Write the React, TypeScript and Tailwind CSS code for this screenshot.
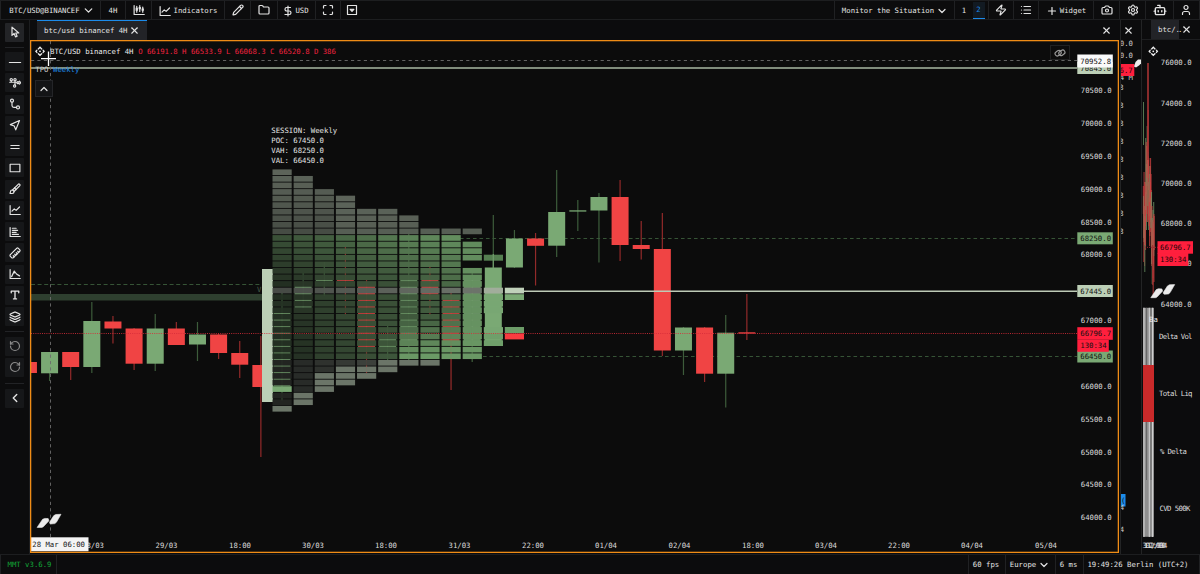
import type { ReactNode } from "react";
import {
  Bot, Brush, Camera, ChevronDown, ChevronLeft, ChevronUp, DollarSign, Folder, Layers, List, Maximize,
  Pencil, Plus, RotateCcw, RotateCw, Ruler, Settings, User, X, Zap,
} from "lucide-react";

const GREEN = "#7aa974";
const RED = "#f04444";
const STEP = 21.13;
const ROW = 6.57;

// [slot, up, open/close top, open/close bottom, high, low], slot 0 is the session start
const candles: [number, number, number, number, number, number][] = [
  [-12, 0, 362, 373, 362, 373],
  [-11, 1, 352, 373.3, 352, 381],
  [-10, 0, 352, 367, 352, 380],
  [-9, 1, 321, 367, 302, 373],
  [-8, 0, 321.5, 328.5, 316, 343.5],
  [-7, 0, 328.5, 363.7, 328, 370],
  [-6, 1, 328.5, 363.7, 314, 371],
  [-5, 0, 328.5, 345, 322, 345],
  [-4, 1, 334.5, 344.5, 322, 361],
  [-3, 0, 334.5, 353, 334, 359],
  [-2, 0, 353, 364.7, 341, 378],
  [-1, 0, 365, 387, 336, 457],
  [0, 1, 312, 386, 293, 401],
  [1, 1, 286, 308, 273, 308],
  [2, 1, 280, 281, 262, 296],
  [3, 0, 280, 281, 247, 315],
  [4, 0, 286, 347.5, 280, 373],
  [5, 1, 339, 348, 326, 361],
  [6, 1, 279, 346, 232, 360],
  [7, 0, 280, 294.5, 267, 315],
  [8, 0, 299.5, 341.5, 293, 390],
  [9, 1, 275, 346, 272, 362],
  [10, 1, 267.5, 345, 215, 346],
  [11, 1, 238.5, 267.5, 230, 268],
  [12, 0, 238.5, 245.8, 233, 285.5],
  [13, 1, 212, 245.7, 170, 257],
  [14, 1, 210.3, 211.6, 200, 231],
  [15, 1, 197, 210.5, 193, 262.5],
  [16, 0, 197, 245, 180, 261],
  [17, 0, 245, 249, 221, 259.5],
  [18, 0, 249, 350.5, 213, 356],
  [19, 1, 327.5, 350.5, 327, 375],
  [20, 0, 327.5, 373.7, 327, 382],
  [21, 1, 332.7, 373.7, 315, 407.5],
  [22, 0, 332.3, 333.6, 294, 340],
];

// first row, last row, first bright tail row, then strength at top, middle and bottom of the value area
const profile = [
  { from: 0, to: 36, tail: 36, top: 0.43, mid: 0.22, low: 0.22 },
  { from: 1, to: 35, tail: 34, top: 0.48, mid: 0.26, low: 0.24 },
  { from: 3, to: 33, tail: 31, top: 0.52, mid: 0.33, low: 0.33 },
  { from: 4, to: 32, tail: 30, top: 0.57, mid: 0.37, low: 0.37 },
  { from: 6, to: 31, tail: 30, top: 0.62, mid: 0.42, low: 0.42 },
  { from: 6, to: 30, tail: 29, top: 0.68, mid: 0.43, low: 0.46 },
  { from: 7, to: 29, tail: 29, top: 0.74, mid: 0.48, low: 0.82 },
  { from: 9, to: 29, tail: 29, top: 0.78, mid: 0.5, low: 0.85 },
  { from: 9, to: 28, tail: 29, top: 0.82, mid: 0.58, low: 0.88 },
  { from: 9, to: 28, tail: 29, top: 0.8, mid: 0.84, low: 0.88 },
];

const timeLabels: [number, string][] = [
  [93, "28/03"], [166.5, "29/03"], [240, "18:00"], [313, "30/03"], [386, "18:00"], [459.5, "31/03"], [533, "22:00"],
  [606, "01/04"], [679.5, "02/04"], [753, "18:00"], [826, "03/04"], [899, "22:00"], [972, "04/04"], [1046, "05/04"],
];

const priceLabels = [70500, 70000, 69500, 69000, 68500, 68000, 67000, 66000, 65500, 65000, 64500, 64000];

function mix(color: number[], strength: number) {
  return `rgb(${color.map((c) => Math.round(12 + (c - 12) * strength)).join(",")})`;
}

function cellColor(col: number, row: number) {
  const p = profile[col];
  if (row === 18) return mix([176, 188, 172], 0.36 + col * 0.025);
  if (row < 10) return mix([136, 148, 132], 0.65 - (col < 3 ? row * 0.02 : (row - 4) * 0.01));
  if (row > 28) return row >= p.tail ? mix([136, 148, 132], 0.77) : mix([120, 130, 118], 0.2 + col * 0.06);
  let s = p.mid;
  if (row < 17) s = p.top + ((p.mid - p.top) * (row - 10)) / 7;
  else if (row > 22) s = p.mid + ((p.low - p.mid) * (row - 22)) / 5;
  return mix([118, 170, 112], Math.min(s, 0.9));
}

function Candle({ c }: { c: (typeof candles)[number] }) {
  const [slot, up, top, bottom, high, low] = c;
  const x = 282 + slot * STEP;
  // candles under the profile only show between its rows
  const covered = slot >= 0 && slot < 10;
  return (
    <g>
      <rect x={x - 0.6} y={high} width="1.2" height={low - high} fill={up ? "#3d5c3b" : "#922a2a"} />
      <rect x={x - 8.5} y={top} width="17" height={bottom - top} fill={up ? GREEN : RED} opacity={covered ? 0.85 : 1} />
    </g>
  );
}

function Profile() {
  const cells: ReactNode[] = [];
  profile.forEach((p, col) => {
    for (let row = p.from; row <= p.to; row++) {
      if (col === 9 && (row === 10 || row === 14)) continue;
      cells.push(
        <rect key={`${col}-${row}`} x={272.5 + col * STEP} y={169.4 + row * ROW} width="19.2" height="5.7"
          fill={col === 0 && row === 33 ? GREEN : cellColor(col, row)} />
      );
    }
  });
  return <g>{cells}</g>;
}

function PriceTag({ y, text, bg, w = 35.5, h = 12 }: { y: number; text: string; bg: string; w?: number; h?: number }) {
  return (
    <g>
      <rect x="1077.3" y={y - h / 2} width={w} height={h} fill={bg} />
      <text x="1080.3" y={y + 2.5} fill="#101010">{text}</text>
    </g>
  );
}

function Logo({ x, y }: { x: number; y: number }) {
  return (
    <g transform={`translate(${x} ${y})`} fill="#ececec" stroke="#ececec" strokeWidth=".6" strokeLinejoin="round">
      <path d="M.3 13.4L5.8 5.3L8 4.4L11.4 4.6L12.1 6.8L6.5 12.8L5 13.4Z" />
      <path d="M12.9 8L17 1.6L19 .5L24.2 .3L19.6 8.3L18 9.6L13.8 10L12.9 9.3Z" />
    </g>
  );
}

function Drag({ x, y }: { x: number; y: number }) {
  return (
    <g transform={`translate(${x} ${y})`} fill="#f2f2f2">
      <path d="M-2.6 -2.4L0 -5L2.6 -2.4L1.5 -1.6L0 -3L-1.5 -1.6ZM-2.6 2.4L0 5L2.6 2.4L1.5 1.6L0 3L-1.5 1.6Z" />
      <path d="M-3.2 -1.9L-5 0L-3.2 1.9L-2.3 1.2L-3.2 0L-2.3 -1.2ZM3.2 -1.9L5 0L3.2 1.9L2.3 1.2L3.2 0L2.3 -1.2Z" />
      <circle r=".9" />
    </g>
  );
}

function MainChart() {
  return (
    <svg className="block h-full w-full text-[7.3px]" viewBox="31 41 1087 511" fill="#dcdcdc">
      <rect x="31" y="294" width="231" height="6.5" fill="#2e3f2f" />
      <path d="M31 284.5H262" stroke="#365436" strokeDasharray="4 2.6" strokeWidth="1" />
      <text x="257" y="291.5" fill="#4a5e49">V</text>
      <path d="M460 238.5H1077M483 356.5H1077" stroke="#365436" strokeDasharray="3.6 2.9" strokeWidth="1" />
      {candles.map((c) => <Candle key={c[0]} c={c} />)}
      <rect x="262" y="269" width="11" height="133" fill="#bccfb6" />
      <Profile />
      {candles.slice(12, 22).map((c) => (
        <rect key={c[0]} x={281.5 + c[0] * STEP} y={c[4]} width="1" height={c[5] - c[4]} fill={c[1] ? "#709c6b" : "#c04c44"} opacity=".08" />
      ))}
      <rect x="483.8" y="254.7" width="19.2" height="6" fill="#557f51" />
      <rect x="492.7" y="254" width="1.2" height="14" fill="#719d6c" />
      {[19, 20, 21, 24, 25, 26].map((r) => (
        <rect key={r} x="483.8" y={169.4 + r * ROW} width="19.2" height="5.8" fill={r > 24 ? "#6f9f6a" : "#78a773"} />
      ))}
      <rect x="483.8" y="287.7" width="19.2" height="5.8" fill="#a1ad9b" />
      <rect x="504.8" y="287.7" width="19.2" height="5.8" fill="#c0d1ba" />
      <rect x="504.8" y="294.2" width="19.2" height="5.8" fill={GREEN} />
      <rect x="504.8" y="327" width="19.2" height="6" fill="#6d9d69" />
      <rect x="504.8" y="333.4" width="19.2" height="6" fill="#f83c40" />
      <path d="M524 291.3H1077" stroke="#bdcab6" strokeWidth="1.6" />
      <path d="M31 333.5H1077" stroke="#d82d3a" strokeDasharray="1 1.2" strokeWidth="1" opacity=".85" />
      <path d="M31 68H1077" stroke="#a9b8a3" strokeWidth="1.7" />
      <path d="M31 60.5H1077M50.5 41V538" stroke="#6c6c6c" strokeDasharray="3.2 3.2" strokeWidth=".9" />

      <g fill="#e6e6e6">
        <text x="271.3" y="133.2">SESSION: Weekly</text>
        <text x="271.3" y="143.2">POC: 67450.0</text>
        <text x="271.3" y="153.2">VAH: 68250.0</text>
        <text x="271.3" y="163.2">VAL: 66450.0</text>
      </g>

      {priceLabels.map((p) => (
        <text key={p} x="1080.8" y={126 + (70000 - p) * 0.0657}>{p}.0</text>
      ))}
      <PriceTag y={68} text="70845.0" bg="#bccfb6" />
      <PriceTag y={61} text="70952.8" bg="#fafafa" h={13} />
      <PriceTag y={238.3} text="68250.0" bg={GREEN} />
      <PriceTag y={291} text="67445.0" bg="#bccfb6" />
      <PriceTag y={356.5} text="66450.0" bg={GREEN} />
      <PriceTag y={345.8} text="130:34" bg="#ff1f3d" w={31.5} />
      <PriceTag y={333.5} text="66796.7" bg="#ff1f3d" h={12.6} />

      {timeLabels.map(([x, t]) => <text key={x} x={x} y="548.3" textAnchor="middle">{t}</text>)}
      <rect x="31" y="537.3" width="57.5" height="14" fill="#f4f4f4" />
      <text x="32.3" y="547.2" fill="#151515">28 Mar 06:00</text>
      <Logo x={36.8} y={514} />

      <Drag x={40} y={51.3} />
      <text x="50" y="54" fill="#ebebeb">BTC/USD binancef 4H</text>
      <text x="138.2" y="54" fill="#f0223f">O 66191.8 H 66533.9 L 66068.3 C 66520.8 D 386</text>
      <text x="35.3" y="71.7" fill="#d0d0d0">TPO</text>
      <text x="53" y="71.7" fill="#1c8bea">Weekly</text>
      <path d="M41 58.6H56M48.5 51.5V66" stroke="#fff" strokeWidth="1.3" />
      <rect x="31" y="41" width="1087" height="511" fill="none" stroke="#ef8c16" strokeWidth=".7" opacity=".8" />
    </svg>
  );
}

// sidebar and toolbar drawings the icon set lacks
function Glyph({ children, size = 12 }: { children: ReactNode; size?: number }) {
  return (
    <svg width={size} height={size} viewBox="0 0 16 16" fill="none" stroke="currentColor" strokeWidth="1.6" strokeLinecap="round" strokeLinejoin="round">
      {children}
    </svg>
  );
}

const LineChart = () => <Glyph><path d="M1.5 2v12H15M4 9.5l3-3 2.5 2 4.5-4.5" /></Glyph>;

const tools: ReactNode[] = [
  <Glyph size={14}><path d="M1.5 8.5H14.5" strokeWidth="1.2" /></Glyph>,
  <Glyph><circle cx="3" cy="3.5" r="1.5" /><circle cx="8" cy="3.5" r="1.5" /><circle cx="12" cy="7.5" r="1.4" /><circle cx="7.5" cy="12" r="1.5" /><path d="M1 7h9M3 5v2M8 5v5M14 5.5L15.5 7.5L14 9.5" /></Glyph>,
  <Glyph><circle cx="4" cy="3.5" r="2" /><circle cx="12" cy="12.5" r="2" /><path d="M4 5.5v4.5q0 2.5 2.5 2.5H10" /></Glyph>,
  <Glyph><path d="M14 2L1.8 7.5L7 9.3L9 14.5Z" /></Glyph>,
  <Glyph><path d="M2.5 6H13.5M2.5 10H13.5" /></Glyph>,
  <Glyph><rect x="1.5" y="3" width="13" height="10" /></Glyph>,
  <Brush size={12} />,
  <LineChart />,
  <Glyph><path d="M1.5 2v12H15M4.5 3h5M4.5 5.8h7M4.5 8.5h5M4.5 11.2h8" /></Glyph>,
  <Ruler size={12} className="rotate-90" />,
  <Glyph><path d="M1.5 2v12H15M3.5 11.500L7 4L10 8L14 10.5M7 4V6.5" /></Glyph>,
  <Glyph><path d="M3 5V2.800H13V5M8 2.800V13.200M6 13.200H10" strokeWidth="1.8" /></Glyph>,
  <Layers size={12} />,
];

function Tool({ children, className = "bg-[#161719]" }: { children: ReactNode; className?: string }) {
  return (
    <button className={`flex h-[19px] w-[19px] shrink-0 items-center justify-center rounded-[1px] ${className}`}>
      {children}
    </button>
  );
}

function Cell({ children, className }: { children: ReactNode; className: string }) {
  return <div className={`flex h-full shrink-0 items-center justify-center border-r border-[#202123] ${className}`}>{children}</div>;
}

function Header() {
  return (
    <header className="flex h-5 shrink-0 items-center justify-between border-y border-[#1d1e20]">
      <div className="flex h-full items-center">
        <Cell className="w-[101px] gap-[2px] border-l pt-px pl-[3px]">BTC/USD@BINANCEF<ChevronDown size={13} /></Cell>
        <Cell className="w-[25px] pt-px">4H</Cell>
        <Cell className="w-[26px]"><Glyph><path d="M1.5 2v12H15M5 3v8M9 2v8M13 4v7" /><path d="M5 5v4M9 4v3M13 6v3" strokeWidth="3" strokeLinecap="butt" /></Glyph></Cell>
        <Cell className="w-[73px] gap-[3px] pt-px"><LineChart />Indicators</Cell>
        <Cell className="w-[26px]"><Pencil size={12} /></Cell>
        <Cell className="w-[27px]"><Folder size={12} /></Cell>
        <Cell className="w-[38px] gap-[1px] pt-px pr-[2px]"><DollarSign size={12} />USD</Cell>
        <Cell className="w-[25px]"><Maximize size={12} /></Cell>
        <div className="flex w-[22px] justify-center">
          <Glyph size={12}><rect x="2" y="2" width="12" height="12" /><path d="M5.5 7h5L8 9.800Z" fill="currentColor" /></Glyph>
        </div>
      </div>
      <div className="flex h-full items-center">
        <Cell className="w-[121px] gap-[2px] border-l pt-px pl-px">Monitor the Situation<ChevronDown size={12} /></Cell>
        <Cell className="w-[34px] gap-[3px]">
          <span className="w-[11px] pt-px text-center">1</span>
          <span className="flex h-[17px] w-[12px] items-center justify-center border-b border-[#1c8bea] bg-[#121a22] pt-px text-[#1c8bea]">2</span>
        </Cell>
        <Cell className="w-[25px]"><Zap size={12} /></Cell>
        <Cell className="w-[25px]"><List size={12} /></Cell>
        <Cell className="w-[55px] gap-[2px] pt-px"><Plus size={12} />Widget</Cell>
        <Cell className="w-[26px]"><Camera size={12} /></Cell>
        <Cell className="w-[26px]"><Settings size={12} /></Cell>
        <Cell className="w-7"><Bot size={14} /></Cell>
        <Cell className="w-[26px] pr-px"><User size={12} /></Cell>
      </div>
    </header>
  );
}

function Sidebar() {
  return (
    <nav className="flex w-[29px] shrink-0 flex-col items-center gap-[2.25px] pt-[2.5px]">
      <Tool className="bg-[#232427]">
        <Glyph><path d="M4 1.5V12.5L6.8 10L8.7 14.5L10.8 13.6L9 9.3H13Z" /></Glyph>
      </Tool>
      <div className="mt-[3px] mb-[2px] h-px w-[19px] bg-[#222326]" />
      {tools.map((icon, i) => <Tool key={i}>{icon}</Tool>)}
      <div className="mt-[3px] mb-[2px] h-px w-[19px] bg-[#222326]" />
      <Tool className="bg-[#161719] text-[#8a8a8a]"><RotateCcw size={12} /></Tool>
      <Tool className="bg-[#161719] text-[#8a8a8a]"><RotateCw size={12} /></Tool>
      <div className="mt-[4px] mb-[2.5px] h-px w-[19px] bg-[#222326]" />
      <Tool><ChevronLeft size={14} /></Tool>
    </nav>
  );
}

const sideMarks = [87, 105, 123, 141, 159, 177, 195, 213, 231];

function SideStrip() {
  return (
    <section className="flex w-[21px] shrink-0 flex-col border-l border-[#232425]">
      <div className="flex h-5 items-center pl-[2px]"><X size={11} /></div>
      <svg className="block w-[20px] flex-1 text-[7.3px]" viewBox="1121 40 20 514" preserveAspectRatio="xMinYMin slice" fill="#ccc">
        <text x="1133" y="46" textAnchor="end">0.0</text>
        <text x="1133" y="58" textAnchor="end">0.0</text>
        <text x="1133" y="80" textAnchor="end">4 M</text>
        {sideMarks.map((y) => <text key={y} x="1119.3" y={y + 3}>3</text>)}
        <rect x="1121" y="64" width="13.3" height="12" fill="#ff1f3d" />
        <text x="1132.7" y="72.8" textAnchor="end" fill="#1a0508">6.7</text>
        <path d="M1134 66.5L1135.5 62L1138 59.5H1141V63.5L1139 65.5L1136 67.5Z" fill="#ececec" />
        <rect x="1121" y="494" width="4.5" height="12.5" fill="#1c8bea" />
        <text x="1121" y="503" fill="#111">(</text>
        <text x="1119.8" y="510">4</text>
        <text x="1119.8" y="532">4</text>
      </svg>
    </section>
  );
}

function MiniChart() {
  const bars: ReactNode[] = [];
  for (let i = 0; i < 46; i++) {
    const x = 1142.8 + i * 0.24;
    const mid = i < 10 ? 200 + ((i * 17) % 44) : i < 22 ? 140 + ((i * 29) % 64) : i < 34 ? 180 + ((i * 23) % 40) : 228 + ((i * 19) % 34);
    const len = 14 + ((i * 31) % 24);
    bars.push(<rect key={i} x={x} y={mid - len} width="1.1" height={len * 2} fill={i % 3 === 1 ? "#6d9467" : "#d04040"} opacity=".75" />);
  }
  return (
    <svg className="block w-[57px] flex-1 text-[7.3px]" viewBox="1142 40 57 514" preserveAspectRatio="xMinYMin slice" fill="#dcdcdc">
      {bars}
      <path d="M1148 63V160" stroke="#a83434" strokeWidth="1.6" />
      <path d="M1152.7 245V285" stroke="#9c3030" strokeWidth="1" />
      <path d="M1143.5 102V145M1144.8 245V272" stroke="#557650" strokeWidth="1" />
      <path d="M1145 247.3H1158" stroke="#9c2530" strokeWidth="1" strokeDasharray="1 1" />
      <Drag x={1153.3} y={51.3} />
      {[76000, 74000, 72000, 70000, 68000, 66000, 64000].map((p, i) => (
        <text key={p} x="1160.8" y={65.3 + i * 40.2}>{p}.0</text>
      ))}
      <rect x="1157.5" y="253" width="30.8" height="13" fill="#ff1f3d" />
      <rect x="1157.5" y="241.2" width="35.5" height="12.5" fill="#ff1f3d" />
      <g fill="#180609">
        <text x="1160" y="249.8">66796.7</text>
        <text x="1160" y="262.2">130:34</text>
      </g>
      <Logo x={1150.5} y={284.3} />
      <rect x="1143" y="307.8" width="11" height="229" fill="#8f8f8f" />
      <path d="M1144 307.8V537M1149.3 307.8V537M1152.5 307.8V537" stroke="#d0d0d0" strokeWidth="1.1" />
      <path d="M1146.5 307.8V480M1151 307.8V480" stroke="#5e5e5e" strokeWidth=".8" />
      <rect x="1143" y="365" width="11" height="57" fill="#c92a2a" />
      <text x="1149" y="321.8" fill="#eee">Ba</text>
      <text x="1159" y="338.8" textLength="33.5">Delta Vol</text>
      <text x="1159" y="396.2" textLength="33.5">Total Liq</text>
      <text x="1160" y="453.6" textLength="27">% Delta</text>
      <text x="1159.5" y="511" textLength="31">CVD 500K</text>
      <text x="1142.5" y="548.3">31/03</text>
      <text x="1144" y="548.3">12:00</text>
      <text x="1145.5" y="548.3">02/04</text>
    </svg>
  );
}

export default function App() {
  return (
    <div className="flex h-[574px] w-[1200px] flex-col overflow-hidden bg-[#0c0c0d] font-['DejaVu_Sans_Mono',monospace] text-[7.3px] leading-none whitespace-pre text-[#e4e4e4] [&_.lucide]:[stroke-width:2.4]">
      <Header />
      <div className="flex min-h-0 flex-1">
        <Sidebar />
        <main className="flex w-[1091px] shrink-0 flex-col border-l border-[#1d1e20]">
          <div className="flex h-5 items-center justify-between pr-[8px] pl-[7px]">
            <div className="flex h-full w-[110px] items-center gap-[2px] border-t border-[#1c8bea] bg-[#222327] pl-[7px]">
              btc/usd binancef 4H<X size={11} />
            </div>
            <X size={11} />
          </div>
          <div className="relative h-[513px] w-[1089px] border border-[#ef8c16] bg-[#0c0c0c]">
            <MainChart />
            <button className="absolute top-[39px] left-[4px] flex h-[17px] w-[18px] items-center justify-center border border-[#242528] bg-[#131416]">
              <ChevronUp size={12} />
            </button>
            <button className="absolute top-[4px] left-[1019px] flex h-[15px] w-5 items-center justify-center border border-[#202122] text-[#999]">
              <Glyph><rect x="1" y="5.5" width="8.5" height="6" rx="3" transform="rotate(-35 5 8)" /><rect x="6.5" y="4.5" width="8.5" height="6" rx="3" transform="rotate(-35 11 8)" /></Glyph>
            </button>
          </div>
        </main>
        <SideStrip />
        <section className="flex flex-1 flex-col border-l border-[#232425]">
          <div className="flex h-5 items-center gap-[2px] border-b border-[#1d1e20] pl-[9px]">
            <div className="flex h-full w-7 items-center bg-[#222327] pl-[7px]">btc/<span className="tracking-[-2px]">..</span></div>
            <X size={11} />
          </div>
          <MiniChart />
        </section>
      </div>
      <footer className="flex h-5 shrink-0 items-center justify-between border-t border-[#1d1e20]">
        <Cell className="w-[57px] border-l pl-[2px] text-[#13a538]">MMT v3.6.9</Cell>
        <div className="flex h-full">
          <Cell className="w-[38px] border-l pr-[2px]">60 fps</Cell>
          <Cell className="w-[50px] gap-[2px] pr-px">Europe<ChevronDown size={12} /></Cell>
          <Cell className="w-[28px] pr-[2px]">6 ms</Cell>
          <Cell className="w-[116px] pr-[7px]">19:49:26 Berlin (UTC+2)</Cell>
        </div>
      </footer>
    </div>
  );
}
